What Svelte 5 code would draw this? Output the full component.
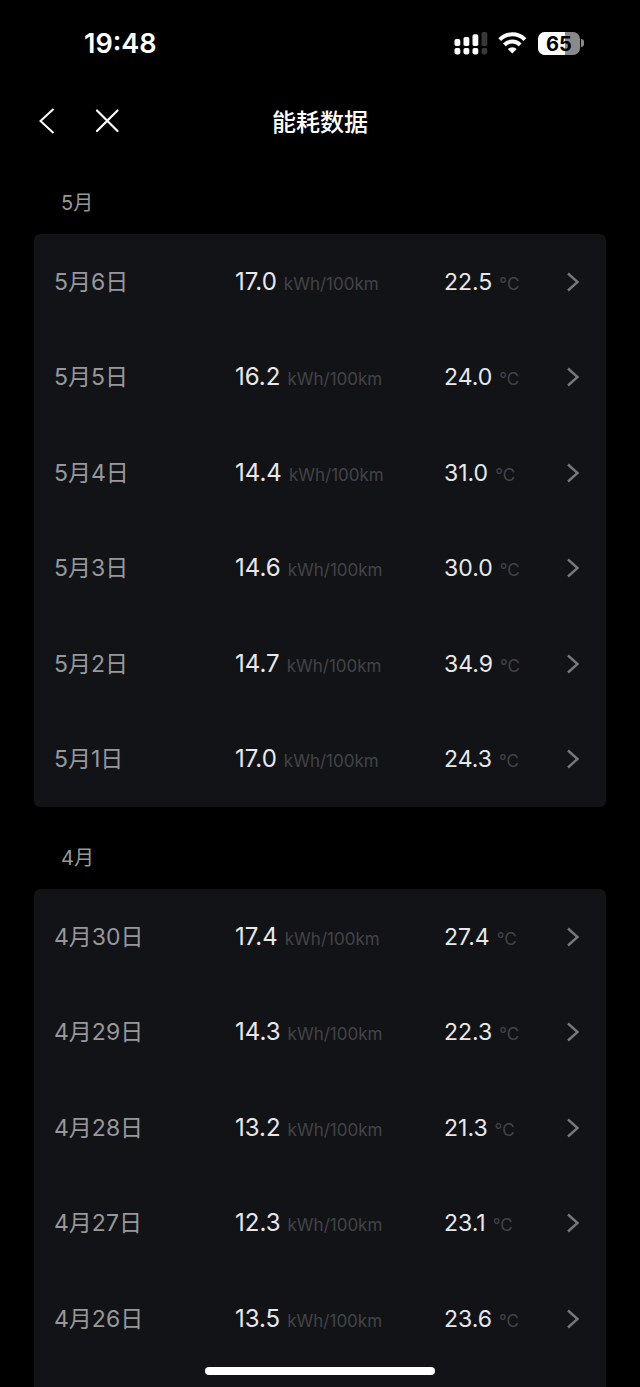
<script>
  const groups = [
    {
      month: '5月',
      days: [
        { date: '5月6日', usage: '17.0', temp: '22.5' },
        { date: '5月5日', usage: '16.2', temp: '24.0' },
        { date: '5月4日', usage: '14.4', temp: '31.0' },
        { date: '5月3日', usage: '14.6', temp: '30.0' },
        { date: '5月2日', usage: '14.7', temp: '34.9' },
        { date: '5月1日', usage: '17.0', temp: '24.3' },
      ],
    },
    {
      month: '4月',
      days: [
        { date: '4月30日', usage: '17.4', temp: '27.4' },
        { date: '4月29日', usage: '14.3', temp: '22.3' },
        { date: '4月28日', usage: '13.2', temp: '21.3' },
        { date: '4月27日', usage: '12.3', temp: '23.1' },
        { date: '4月26日', usage: '13.5', temp: '23.6' },
      ],
    },
  ];

  let battery = $state(65);
</script>

<div class="screen">
  <div class="status">
    <span class="time">19:48</span>
    <div class="indicators">
      <!-- dual SIM signal -->
      <svg width="34" height="24" viewBox="0 0 34 24" fill="#fff" aria-hidden="true">
        <rect x="0.5" y="8" width="5.8" height="7" rx="1.8" />
        <rect x="9.5" y="6" width="5.8" height="9" rx="1.8" />
        <rect x="18.5" y="3.2" width="5.8" height="11.8" rx="1.8" />
        <rect x="27.5" y="1" width="5.8" height="14" rx="1.8" fill="#38383a" />
        <rect x="0.5" y="17" width="5.8" height="6.4" rx="1.8" />
        <rect x="9.5" y="17" width="5.8" height="6.4" rx="1.8" />
        <rect x="18.5" y="17" width="5.8" height="6.4" rx="1.8" />
        <rect x="27.5" y="17" width="5.8" height="6.4" rx="1.8" fill="#38383a" />
      </svg>
      <svg width="30" height="24" viewBox="0 0 30 24" fill="none" stroke="#fff" stroke-width="4" aria-hidden="true">
        <path d="M1.7 8.6a17.8 17.8 0 0 1 25.2 0" />
        <path d="M6.4 13.8a11.2 11.2 0 0 1 15.8 0" />
        <path d="M14.3 22.6l-4.4-4.5a6.2 6.2 0 0 1 8.8 0z" fill="#fff" stroke="none" />
      </svg>
      <div class="battery">
        <span class="cell">
          <span class="charge" style="width: {battery}%"></span>
          <span class="level">{battery}</span>
        </span>
        <span class="cap"></span>
      </div>
    </div>
  </div>

  <header>
    <div class="nav">
      <button aria-label="返回">
        <svg width="28" height="28" viewBox="0 0 28 28" fill="none" stroke="#fff" stroke-width="2" aria-hidden="true">
          <path d="M21.5 2L8.5 14l13 12" />
        </svg>
      </button>
      <button aria-label="关闭">
        <svg width="28" height="28" viewBox="0 0 28 28" fill="none" stroke="#fff" stroke-width="2.2" stroke-linecap="round" aria-hidden="true">
          <path d="M5 3.5l20.5 20.5M25.5 3.5L5 24" />
        </svg>
      </button>
    </div>
    <h1>能耗数据</h1>
  </header>

  <main>
    {#each groups as group}
      <section>
        <h2>{group.month}</h2>
        <ul>
          {#each group.days as day}
            <li>
              <a href="#detail">
                <span class="date">{day.date}</span>
                <span class="value">{day.usage}<small>kWh/100km</small></span>
                <span class="value temp">{day.temp}<small>°C</small></span>
                <svg width="14" height="20" viewBox="0 0 14 20" fill="none" stroke="#77777a" stroke-width="2.4" aria-hidden="true">
                  <path d="M2 1.5l9.5 8.5L2 18.5" />
                </svg>
              </a>
            </li>
          {/each}
        </ul>
      </section>
    {/each}
  </main>

  <div class="home-bar"></div>
</div>

<style>
  :global(body) { background: #000; }

  .screen { min-height: 100vh; display: flex; flex-direction: column; background: #000; color: #fff; font-family: Inter, 'Noto Sans CJK SC', sans-serif; }

  .status { display: flex; justify-content: space-between; align-items: center; height: 86px; padding: 0 56px 0 84px; }
  .time { font-size: 27px; font-weight: 600; }
  .indicators { display: flex; align-items: center; gap: 10px; }
  .battery { display: flex; align-items: center; gap: 1px; }
  .cell { position: relative; width: 42px; height: 23px; border-radius: 7px; background: #8a8a8c; overflow: hidden; }
  .charge { position: absolute; inset: 0 auto 0 0; background: #fff; }
  .level { position: relative; display: block; line-height: 24px; text-align: center; font-size: 20px; font-weight: 700; color: #000; }
  .cap { width: 3px; height: 8px; border-radius: 0 3px 3px 0; background: #8a8a8c; }

  header { display: grid; grid-template-columns: 1fr auto 1fr; align-items: center; height: 70px; padding: 0 32px; }
  .nav { display: flex; gap: 32px; }
  button { display: flex; padding: 0; border: 0; background: none; cursor: pointer; }
  h1 { margin: 0; padding-top: 4px; font-size: 24px; line-height: 34px; font-weight: 500; }

  main { flex: 1; display: flex; flex-direction: column; gap: 2px; padding: 0 34px; }
  section { display: flex; flex-direction: column; }
  section:last-child { flex: 1; }
  h2 { margin: 0; padding: 32px 27px 16px; font-size: 20px; line-height: 30px; font-weight: 400; color: #98989a; }
  section + section h2 { padding-top: 34px; }

  ul { margin: 0; padding: 0; list-style: none; border-radius: 6px; background: #121317; }
  section:last-child ul { flex: 1; border-radius: 6px 6px 0 0; }
  a { display: grid; grid-template-columns: 181fr 209fr 122fr auto; align-items: center; height: 95px; padding: 0 26px 0 20px; font-size: 24px; line-height: 30px; color: inherit; text-decoration: none; }
  li:nth-child(even) a { height: 96px; }
  .date { font-size: 23px; color: #98989b; }
  .value { color: #e8e8ec; white-space: nowrap; }
  .temp { font-size: 23px; }
  small { margin-left: 7px; font-size: 17px; line-height: 20px; color: #424347; }

  .home-bar { position: fixed; bottom: 12px; left: 50%; width: 230px; height: 8px; border-radius: 4px; background: #fff; transform: translateX(-50%); }
</style>
